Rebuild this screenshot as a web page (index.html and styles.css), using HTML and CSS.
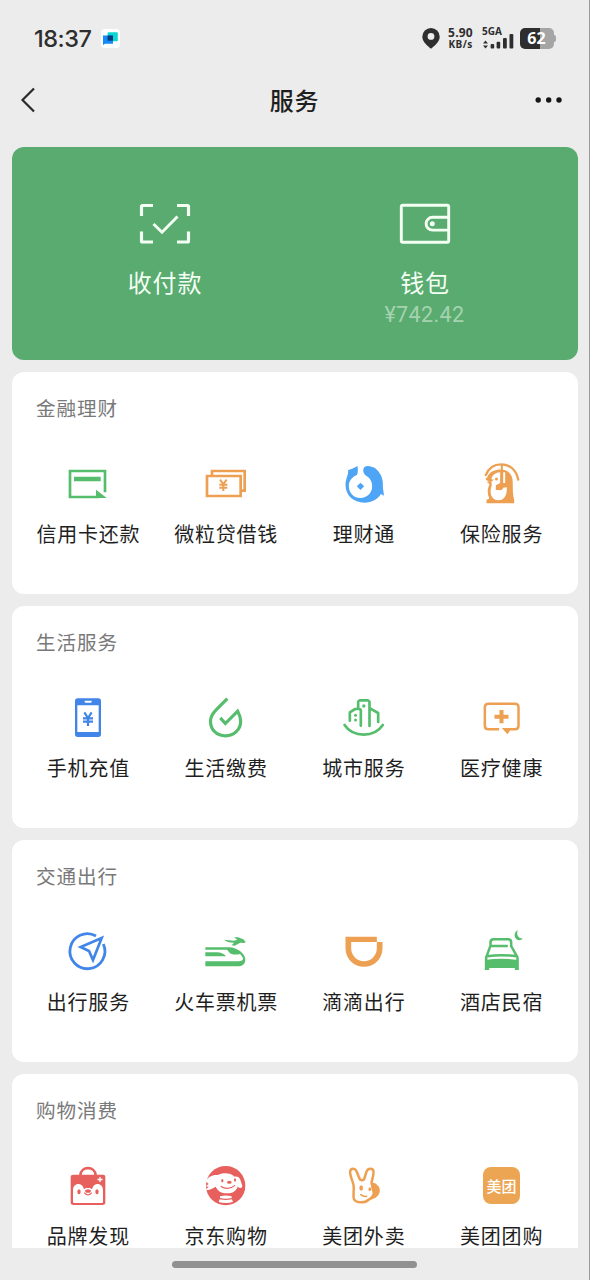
FILE: index.html
```html
<!DOCTYPE html>
<html lang="zh-CN">
<head>
<meta charset="utf-8">
<title>服务</title>
<link rel="stylesheet" href="styles.css">
</head>
<body>
<div class="screen">
  <header class="status">
    <div class="status-left">
      <span class="clock">18:37</span>
      <svg class="app-badge" viewBox="0 0 19 19"><rect width="19" height="19" rx="4" fill="#fff"/><rect x="6.6" y="3.2" width="10.2" height="9" rx="1" fill="#0bd8d0"/><path d="M2 6.5h10v8.2H4L2 16z" fill="#1389fa"/><rect x="6.6" y="6.5" width="5.4" height="5.2" fill="#063c78"/></svg>
    </div>
    <div class="status-right">
      <svg class="pin" viewBox="0 0 18 21"><path fill-rule="evenodd" d="M9 0a8.7 8.7 0 0 1 8.7 8.7C17.700 14 12 18 9 20.800 6 18 .3 14 .3 8.700A8.700 8.700 0 0 1 9 0zm0 5a3.400 3.400 0 1 0 0 6.800A3.400 3.400 0 0 0 9 5z" fill="#2e2e2e"/></svg>
      <div class="speed"><span class="speed-num">5.90</span><span class="speed-unit">KB/s</span></div>
      <div class="signal">
        <span class="net">5GA</span>
        <svg class="bars" viewBox="0 0 32 16" fill="#2e2e2e"><path d="M1 10.500L3.500 7.500 6 10.500zM1 12.500h5l-2.500 3z"/><rect x="8.600" y="11" width="3.600" height="4.500" rx="1"/><rect x="14.600" y="8.700" width="3.600" height="6.800" rx="1"/><rect x="21" y="5" width="3.800" height="10.500" rx="1"/><rect x="27.500" y="1" width="3.800" height="14.500" rx="1"/></svg>
      </div>
      <div class="battery"><span class="battery-num">62</span></div>
    </div>
  </header>

  <nav class="navbar">
    <svg class="back" viewBox="0 0 16 26"><path d="M14 1.500L2.500 13 14 24.500" fill="none" stroke="#2b2b2b" stroke-width="2.200"/></svg>
    <h1 class="title">服务</h1>
    <svg class="more" viewBox="0 0 28 6" fill="#161616"><circle cx="3.200" cy="3" r="2.700"/><circle cx="13.700" cy="3" r="2.700"/><circle cx="24" cy="3" r="2.700"/></svg>
  </nav>

  <main class="content">
    <section class="pay">
      <div class="pay-item">
        <svg class="pay-icon" viewBox="0 0 52 42" fill="none" stroke="#f4fff4" stroke-width="3.200"><path d="M2.500 13V3.500a1 1 0 0 1 1-1H14M38 2.500h10.500a1 1 0 0 1 1 1V13M49.500 28.500V38a1 1 0 0 1-1 1H38M14 39H3.500a1 1 0 0 1-1-1V28.500"/><path d="M14.500 21l8.500 8.300L38.500 13.500" stroke-width="2.900"/></svg>
        <span class="pay-label">收付款</span>
      </div>
      <div class="pay-item">
        <svg class="pay-icon" viewBox="0 0 52 42" fill="none" stroke="#f4fff4" stroke-width="2.900"><rect x="2.300" y="2.200" width="47.400" height="37" rx="1.500"/><path d="M49.500 14.300H33.500a6.400 6.400 0 0 0 0 12.800h16"/><circle cx="33.300" cy="20.700" r="2.500" fill="#f4fff4" stroke="none"/></svg>
        <span class="pay-label">钱包</span>
        <span class="balance">¥742.42</span>
      </div>
    </section>

    <section class="card">
      <h2 class="card-title">金融理财</h2>
      <div class="grid">
        <div class="item">
          <svg class="icon green" viewBox="132 30 144 144"><path class="line" stroke-width="8" d="M255 127V63H150v78h88"/><path d="M162 80h80v14h-80zM228 119l32 25h-32z"/></svg>
          <span class="label">信用卡还款</span>
        </div>
        <div class="item">
          <svg class="icon orange" viewBox="546 30 144 144"><path class="line" stroke-width="8" d="M561 78h101v60h-101zM576 74V63h98V122h-12"/><path class="line" stroke-width="6" d="M600 89l10 13 10-13M610 102v21M598 104h24M598 113h24"/></svg>
          <span class="label">微粒贷借钱</span>
        </div>
        <div class="item">
          <svg class="icon sky" viewBox="118.500 30 144 144"><path d="M143 60q10-1 28-12 3 19-2 27c-14 6-24 17-24 33 0 22 16 36 35 36s35-14 35-35c0-16-8-26-20-33-8-8-9-21-2-26 8-5 22-1 30 4 18 12 26 36 24 56 1 10 3 18 3 27l-9-5c-9 16-27 26-49 26-33 0-57-22-57-53 0-19 9-29 8-45z"/><path d="M180 98l11 11-11 11-11-11z"/></svg>
          <span class="label">理财通</span>
        </div>
        <div class="item">
          <svg class="icon orange" viewBox="532.500 30 144 144"><path class="line" stroke-width="7" stroke-linecap="round" d="M556 75c8-20 25-32 46-32 27 0 46 18 51 46"/><path d="M559 85c4-14 14-22 29-25 26-5 43 5 48 27 2 19-1 42 5 62v11h-83v-10l8-5c-6-14-6-29 1-41l-3-5-6-3 12-3z"/><path fill="#fff" d="M573 85c4-11 12-17 26-18v32l-13 7v14h13c5 0 8-3 9-7l11-1c1 25-8 39-25 39-21 0-29-22-20-46l-2-13z"/><path fill="#fff" d="M608 67h6v32h-6z"/><path class="line" stroke="#fff" stroke-width="4" d="M561 103c-6 16-4 32 3 43"/><circle cx="588" cy="87" r="4.500"/><path d="M555 83l25 6-10 8-13-7z"/><path class="line" stroke-width="6" d="M604 44v67q-1 8-10 6"/></svg>
          <span class="label">保险服务</span>
        </div>
      </div>
    </section>

    <section class="card">
      <h2 class="card-title">生活服务</h2>
      <div class="grid">
        <div class="item">
          <svg class="icon blue" viewBox="132 27 144 144"><path fill-rule="evenodd" d="M173 40h62q8 0 8 8v100q0 8-8 8h-62q-8 0-8-8V48q0-8 8-8zm-1 21v80h64V61zM194 47v3q0 3 3 3h15q3 0 3-3v-3z"/><path class="line" stroke-width="6.500" d="M193 82l11 17 11-17M204 97v26M189 100h30M189 110h30"/></svg>
          <span class="label">手机充值</span>
        </div>
        <div class="item">
          <svg class="icon green" viewBox="546 27 144 144"><path class="line" stroke-width="9.500" d="M622 41L589 74C577 86 571.500 95 571.500 109c0 27 20 43.500 45 43.500 25 0 45.500-19 45.500-44 0-12-4-21-9-30l-37 37-15-17"/></svg>
          <span class="label">生活缴费</span>
        </div>
        <div class="item">
          <svg class="icon green" viewBox="118.500 27 144 144"><g class="line" stroke-width="8" stroke-linecap="round" stroke-linejoin="round"><path d="M132 120c13 19 33 29 58 29s44-10 57-29"/><path d="M148 107V82l16-10h12q5 0 5 5v45M173 70V50l4-4h25l5 4v73M210 71l23 13v27"/></g><circle cx="190" cy="63" r="5"/><circle cx="165" cy="91" r="4.500"/><circle cx="165" cy="105" r="4.500"/></svg>
          <span class="label">城市服务</span>
        </div>
        <div class="item">
          <svg class="icon orange" viewBox="532.500 27 144 144"><path class="line" stroke-width="7.500" d="M596 133h-32q-11 0-11-11V67q0-11 11-11h79q11 0 11 11v55q0 11-11 11h-14"/><path d="M597 75h12v14h15v12h-15v14h-12v-14h-15V89h15zM604 129h30l-13 19z"/></svg>
          <span class="label">医疗健康</span>
        </div>
      </div>
    </section>

    <section class="card">
      <h2 class="card-title">交通出行</h2>
      <div class="grid">
        <div class="item">
          <svg class="icon blue" viewBox="132 24 144 144"><path class="line" stroke-width="8.500" d="M228 48a52.500 52.500 0 1 0 22 24"/><path class="line" stroke-width="8" d="M245 54L182 81l25 12 12 27z"/></svg>
          <span class="label">出行服务</span>
        </div>
        <div class="item">
          <svg class="icon green" viewBox="546 24 144 144"><path d="M612 59q16 2 30 3l10-3-10-7h12l16 6 7 8-4 3-12-1-17 9-9-1 7-8q-20 0-30-9z"/><path fill-rule="evenodd" d="M556 82h72c24 0 48 20 48 37 0 13-10 20-23 20h-97v-15h99c10 0 15-3 14-9-1-4-5-9-9-13-15 4-31 1-36-10l-3-3h-65z"/><path d="M556 97h34q20 1 28 12h-62z"/></svg>
          <span class="label">火车票机票</span>
        </div>
        <div class="item">
          <svg class="icon orange" viewBox="118.500 24 144 144"><path fill-rule="evenodd" d="M135 50h94v16h17v19a55.500 55.500 0 0 1-111 0zm17 16v19a38.500 38.500 0 0 0 77 0V66z"/></svg>
          <span class="label">滴滴出行</span>
        </div>
        <div class="item">
          <svg class="icon green" viewBox="532.500 24 144 144"><path class="line" stroke-width="7.500" stroke-linejoin="round" d="M570 82V66q1-8 9-8h44q8 0 9 8v16M571 78h51M569 80l-12 32v8M632 78l19 34v8M560 109q42-7 90 0"/><path d="M553 120q51-7 102 0v30h-12v-6h-77v6h-13zM652 30c-14 7-13 28 4 31 5 0 9-2 11-6-13 2-21-12-15-25z"/></svg>
          <span class="label">酒店民宿</span>
        </div>
      </div>
    </section>

    <section class="card">
      <h2 class="card-title">购物消费</h2>
      <div class="grid">
        <div class="item">
          <svg class="icon red" viewBox="132 21 144 144"><path class="line" stroke-width="8" d="M181 61c1-29 45-29 46 0"/><path d="M160 59h90q6 0 6 6v77q0 8-8 8h-88q-8 0-8-8V65q0-6 8-6z"/><path fill="#fff" d="M159 140V106c0-25 29-25 33-3 4-5 20-5 24 0 4-22 33-22 33 3v34q0 4-4 4h-82q-4 0-4-4z"/><path d="M194 107q10-9 20 0l-5 6h-10z"/><path class="line" stroke-width="3.500" d="M193 113q11 14 22 0"/><ellipse cx="177" cy="110" rx="5" ry="7.500"/><ellipse cx="231" cy="110" rx="5" ry="7.500"/><path d="M240 66v15M232.500 73.500h15" stroke="#fff" stroke-width="4"/></svg>
          <span class="label">品牌发现</span>
        </div>
        <div class="item">
          <svg class="icon red" viewBox="546 21 144 144"><circle cx="617" cy="92" r="59"/><path fill="#fff" d="M557 79c7-14 21-21 37-19 13-8 39-7 50 5 9-1 14 2 17 9l6 19c-1 7-7 8-14 2-5 14-18 21-32 20-17 0-28-7-34-20l-11 6c-7 3-16 5-19 3l9-9-9-1 9-7z"/><ellipse cx="628" cy="82" rx="7" ry="4.500"/><ellipse cx="607" cy="77" rx="3.300" ry="5"/><ellipse cx="645" cy="75" rx="3" ry="5"/><path class="line" stroke-width="3.500" d="M602 94q22 14 43-3"/><path fill="#fff" d="M600 124q17-5 35 0v5q-17 5-35 0zM599 133q18 4 37 0l3 8q-22 6-43 0z"/></svg>
          <span class="label">京东购物</span>
        </div>
        <div class="item">
          <svg class="icon orange" viewBox="118.500 21 144 144"><path d="M214 82c26 6 32 30 13 45l-14 7z"/><path class="line paper" stroke-width="7.500" stroke-linejoin="round" d="M159 90C156 75 147 60 149 49c2-10 14-10 18-2 5 9 7 20 12 27q6 3 11 0c4-8 5-18 9-26 4-10 19-9 20 1 1 14-5 25-6 35 3 7 3 13 4 19 7 13 0 26-14 32-10 10-36 9-42-1-5-11 1-28-2-44z"/><ellipse cx="182" cy="99" rx="5.500" ry="8"/><ellipse cx="208" cy="103" rx="4" ry="6"/><path class="line" stroke-width="5" stroke-linecap="round" d="M181 119q8 7 17 5"/></svg>
          <span class="label">美团外卖</span>
        </div>
        <div class="item">
          <span class="icon meituan">美团</span>
          <span class="label">美团团购</span>
        </div>
      </div>
    </section>
  </main>

  <footer class="home"><div class="home-bar"></div></footer>
</div>
</body>
</html>
```
FILE: styles.css
```css
* { box-sizing: border-box; }
body {
  margin: 0;
  background: #ececec;
  font-family: "Noto Sans CJK SC", sans-serif;
  color: #1f1f1f;
}
h1, h2 { margin: 0; font-weight: 400; }
svg { display: block; }
.screen {
  width: 590px;
  height: 1280px;
  display: flex;
  flex-direction: column;
  overflow: hidden;
  border-right: 1px solid #9a9a9a;
}

.status {
  height: 76px;
  flex: none;
  display: flex;
  justify-content: space-between;
  padding: 0 33px 0 34px;
  color: #2e2e2e;
}
.status-left { display: flex; align-items: center; gap: 10px; }
.clock { font: 500 23.500px/30px Inter, sans-serif; letter-spacing: -0.500px; width: 57px; padding-top: 1px; white-space: nowrap; }
.app-badge { width: 19px; height: 19px; }
.status-right { display: flex; align-items: center; }
.pin { width: 18px; height: 21px; margin-right: 7px; }
.speed {
  width: 27px;
  margin-right: 8px;
  display: flex;
  flex-direction: column;
  align-items: center;
  font-family: "Open Sans", sans-serif;
  font-weight: 700;
}
.speed-num { font-size: 12px; line-height: 12px; letter-spacing: 0.200px; }
.speed-unit { font-size: 10px; line-height: 10px; letter-spacing: 0.400px; }
.signal { width: 32px; height: 22px; display: grid; }
.net { grid-area: 1 / 1; font: 700 10px/9px "Open Sans", sans-serif; }
.bars { grid-area: 1 / 1; width: 32px; height: 16px; align-self: end; }
.battery {
  width: 34px;
  height: 21px;
  margin: 0 2px 0 6px;
  border-radius: 5px;
  background: linear-gradient(90deg, #2e2e2e 60%, #a5a5a5 60%);
  display: flex;
  align-items: center;
  justify-content: center;
  position: relative;
}
.battery::after {
  content: "";
  position: absolute;
  right: -2px;
  top: 7px;
  width: 2px;
  height: 7px;
  background: #a5a5a5;
  border-radius: 0 2px 2px 0;
}
.battery-num { color: #fff; font: 700 16px/20px "Open Sans", sans-serif; padding-right: 1px; }

.navbar {
  height: 71px;
  flex: none;
  display: flex;
  align-items: center;
  justify-content: space-between;
  padding: 0 26px 23px 20px;
}
.back { width: 16px; height: 26px; }
.title { font-size: 24px; line-height: 30px; font-weight: 500; letter-spacing: 0.700px; padding-left: 18px; }
.more { width: 28px; height: 6px; }

.content {
  flex: none;
  height: 1101px;
  overflow: hidden;
  padding: 0 11px 0 12px;
  display: flex;
  flex-direction: column;
  gap: 12px;
}
.pay {
  height: 213px;
  flex: none;
  border-radius: 12px;
  background: #59ab70;
  display: grid;
  grid-template-columns: 1fr 1fr;
  padding: 56px 23px 0;
  color: #f4fff4;
}
.pay-item { display: flex; flex-direction: column; align-items: center; }
.pay-icon { width: 52px; height: 42px; }
.pay-label { margin-top: 19px; font-size: 24px; line-height: 36px; letter-spacing: 0.800px; }
.balance { font: 400 21.500px/24px Roboto, sans-serif; letter-spacing: 0.400px; color: #a5d3af; margin-top: 3px; padding-right: 1px; }

.card {
  height: 222px;
  flex: none;
  border-radius: 12px;
  background: #fff;
  padding: 22px 7.500px 0;
}
.card-title { font-size: 19.600px; line-height: 28px; letter-spacing: 0.900px; color: #797979; padding-left: 16.500px; }
.grid { display: grid; grid-template-columns: repeat(4, 1fr); padding-top: 38px; }
.item { display: flex; flex-direction: column; align-items: center; }
.icon { width: 48px; height: 48px; stroke-width: 0; }
.label { margin-top: 11px; font-size: 20px; line-height: 30px; letter-spacing: 0.800px; white-space: nowrap; }

.green { fill: #55bd6c; stroke: #55bd6c; }
.orange { fill: #eea052; stroke: #eea052; }
.blue { fill: #4285e8; stroke: #4285e8; }
.sky { fill: #4ea5f5; stroke: #4ea5f5; }
.red { fill: #e8605d; stroke: #e8605d; }
.line { fill: none; }
.paper { fill: #fff; }
.meituan {
  width: 37px;
  height: 37px;
  margin: 5px 0 6px;
  border-radius: 8px;
  background: #eca553;
  color: #fff;
  font-size: 15px;
  font-weight: 500;
  line-height: 37px;
  text-align: center;
}

.home { flex: 1; display: flex; justify-content: center; padding-top: 13px; }
.home-bar { width: 245px; height: 7px; border-radius: 4px; background: #909090; }
```
